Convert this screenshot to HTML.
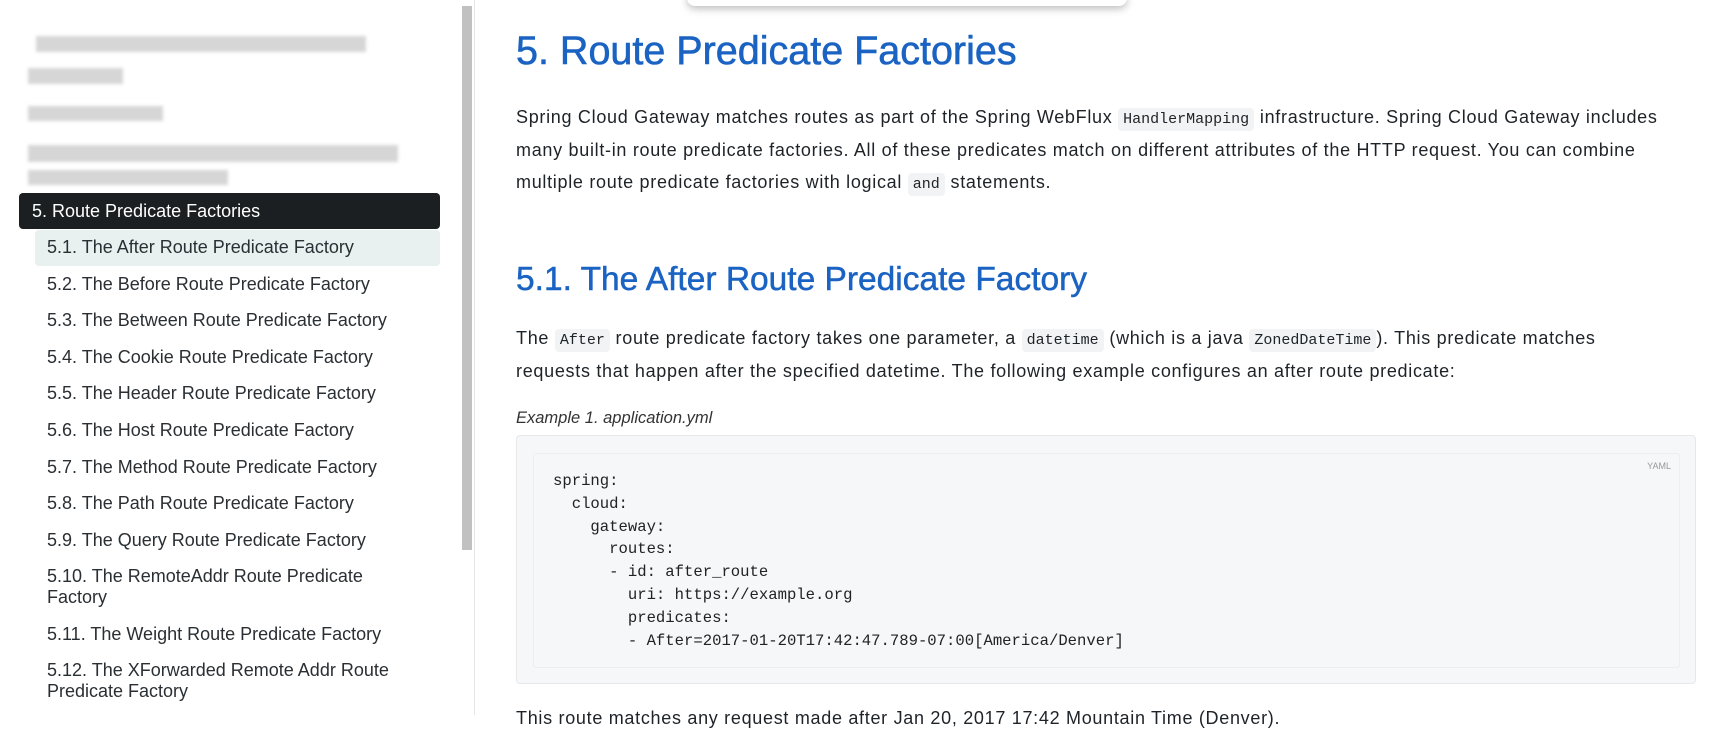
<!DOCTYPE html>
<html><head><meta charset="utf-8"><style>
*{margin:0;padding:0;box-sizing:border-box}
body{width:1711px;height:715px;overflow:hidden;background:#fff;font-family:"Liberation Sans",sans-serif;color:#1e2328;position:relative}
.side{position:absolute;left:0;top:0;width:475px;height:715px;border-right:1px solid #e4e6e8}
.sb{position:absolute;left:462px;top:6px;width:10px;height:544px;background:#c1c1c1}
.blur{position:absolute;background:#ccc;filter:blur(1.5px);opacity:.8}
.act{position:absolute;left:19px;top:193px;width:421px;height:36px;background:#1b1f21;border-radius:4px;color:#fff;font-size:18px;line-height:36px;padding-left:13px}
.hl{position:absolute;left:35px;top:230px;width:405px;height:36px;background:#e8f0f0;border-radius:4px}
.it{position:absolute;left:47px;font-size:18px;color:#2a2f33;line-height:21px;width:380px;white-space:nowrap}
.main{position:absolute;left:516px;top:0;width:1180px}
h1{position:absolute;top:29px;font-size:39.5px;font-weight:normal;color:#1b63c2;white-space:nowrap;-webkit-text-stroke:.6px #1b63c2}
h2{position:absolute;top:261px;font-size:33.5px;font-weight:normal;color:#1b63c2;white-space:nowrap;-webkit-text-stroke:.5px #1b63c2}
.p{position:absolute;font-size:18px;line-height:32.5px;white-space:nowrap;color:#1e2328;letter-spacing:.7px}
code{font-family:"Liberation Mono",monospace;font-size:15px;background:#f1f3f4;padding:3px 5px;border-radius:4px;line-height:1;letter-spacing:0}
.cap{position:absolute;top:409px;font-style:italic;font-size:16.5px;color:#333}
.box{position:absolute;left:0;top:435px;width:1180px;height:249px;background:#f5f7f8;border:1px solid #e6e8ea;border-radius:4px}
.inner{position:absolute;left:16px;top:17px;width:1147px;height:215px;border:1px solid #eceef0;border-radius:3px}
pre{position:absolute;left:19px;top:16px;font-family:"Liberation Mono",monospace;font-size:15.6px;line-height:22.8px;color:#222}
.yaml{position:absolute;right:8px;top:7px;font-size:9px;color:#999}
.pop{position:absolute;left:687px;top:-10px;width:440px;height:16px;background:#fff;border-radius:8px;box-shadow:0 3px 8px rgba(0,0,0,.25)}
</style></head><body>
<div class="side">
<div class="blur" style="left:36px;top:36px;width:330px;height:16px"></div>
<div class="blur" style="left:28px;top:68px;width:95px;height:16px"></div>
<div class="blur" style="left:28px;top:106px;width:135px;height:15px"></div>
<div class="blur" style="left:28px;top:145px;width:370px;height:17px"></div>
<div class="blur" style="left:28px;top:170px;width:200px;height:15px"></div>
<div class="act">5. Route Predicate Factories</div>
<div class="hl"></div>
<div class="it" style="top:237px">5.1. The After Route Predicate Factory</div>
<div class="it" style="top:274px">5.2. The Before Route Predicate Factory</div>
<div class="it" style="top:310px">5.3. The Between Route Predicate Factory</div>
<div class="it" style="top:347px">5.4. The Cookie Route Predicate Factory</div>
<div class="it" style="top:383px">5.5. The Header Route Predicate Factory</div>
<div class="it" style="top:420px">5.6. The Host Route Predicate Factory</div>
<div class="it" style="top:457px">5.7. The Method Route Predicate Factory</div>
<div class="it" style="top:493px">5.8. The Path Route Predicate Factory</div>
<div class="it" style="top:530px">5.9. The Query Route Predicate Factory</div>
<div class="it" style="top:566px">5.10. The RemoteAddr Route Predicate<br>Factory</div>
<div class="it" style="top:624px">5.11. The Weight Route Predicate Factory</div>
<div class="it" style="top:660px">5.12. The XForwarded Remote Addr Route<br>Predicate Factory</div>
<div class="sb"></div>
</div>
<div class="pop"></div>
<div class="main">
<h1>5. Route Predicate Factories</h1>
<div class="p" style="top:101px">Spring Cloud Gateway matches routes as part of the Spring WebFlux <code>HandlerMapping</code> infrastructure. Spring Cloud Gateway includes<br>many built-in route predicate factories. All of these predicates match on different attributes of the HTTP request. You can combine<br>multiple route predicate factories with logical <code>and</code> statements.</div>
<h2>5.1. The After Route Predicate Factory</h2>
<div class="p" style="top:322px">The <code>After</code> route predicate factory takes one parameter, a <code>datetime</code> (which is a java <code>ZonedDateTime</code>). This predicate matches<br>requests that happen after the specified datetime. The following example configures an after route predicate:</div>
<div class="cap">Example 1. application.yml</div>
<div class="box"><div class="inner"><span class="yaml">YAML</span>
<pre>spring:
  cloud:
    gateway:
      routes:
      - id: after_route
        uri: https://example.org
        predicates:
        - After=2017-01-20T17:42:47.789-07:00[America/Denver]</pre></div></div>
<div class="p" style="top:702px">This route matches any request made after Jan 20, 2017 17:42 Mountain Time (Denver).</div>
</div>
</body></html>
